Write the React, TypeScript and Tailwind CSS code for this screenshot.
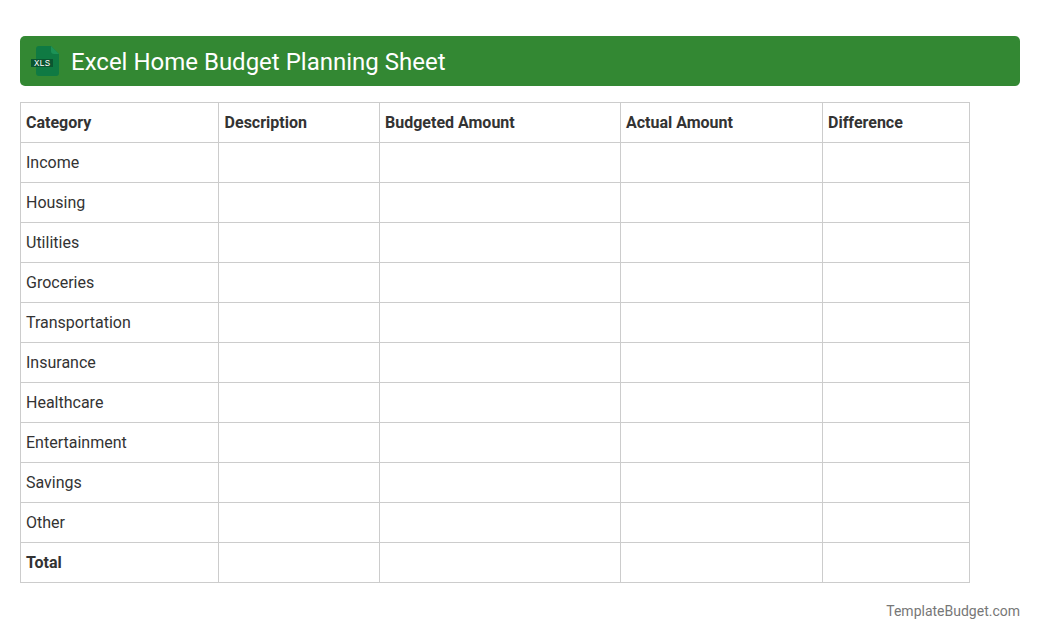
import React from 'react';

const categories = ['Income', 'Housing', 'Utilities', 'Groceries', 'Transportation', 'Insurance', 'Healthcare', 'Entertainment', 'Savings', 'Other'];
const columns = ['Category', 'Description', 'Budgeted Amount', 'Actual Amount', 'Difference'];

function XlsIcon() {
    return (
        <svg width="30" height="32" viewBox="0 0 30 32" className="shrink-0">
            <path d="M6 4a3 3 0 0 1 3-3h12l8 8v19a3 3 0 0 1-3 3H9a3 3 0 0 1-3-3z" fill="#0f7a43" />
            <path d="M21 1l8 8h-5a3 3 0 0 1-3-3z" fill="#1c9256" />
            <rect x="1" y="14" width="22" height="8" fill="#0a5530" />
            <text x="12" y="21" textAnchor="middle" fontSize="9" fill="#fff" fontFamily="'Liberation Mono', monospace">XLS</text>
        </svg>
    );
}

function Row({ label, bold }: { label: string; bold?: boolean }) {
    return (
        <tr className="h-10">
            <td className={`border border-[#cccccc] px-[5px] py-0 ${bold ? 'font-bold' : ''}`}>{label}</td>
            <td className="border border-[#cccccc]"></td>
            <td className="border border-[#cccccc]"></td>
            <td className="border border-[#cccccc]"></td>
            <td className="border border-[#cccccc]"></td>
        </tr>
    );
}

export default function App() {
    return (
        <div className="w-[1040px] h-[640px] overflow-hidden bg-white px-5 pt-9 font-['Roboto',sans-serif] text-[#333333]">
            <div className="flex h-[50px] items-center rounded-[5px] bg-[#338833] pl-[10px]">
                <XlsIcon />
                <h1 className="ml-[11px] pt-[2px] text-2xl font-normal text-white">Excel Home Budget Planning Sheet</h1>
            </div>

            <table className="mt-4 w-[949px] table-fixed border-collapse text-base">
                <colgroup>
                    <col className="w-[198px]" />
                    <col className="w-[161px]" />
                    <col className="w-[241px]" />
                    <col className="w-[202px]" />
                    <col className="w-[147px]" />
                </colgroup>
                <thead>
                    <tr className="h-10">
                        {columns.map((c) => (
                            <th key={c} className={`border border-[#cccccc] py-0 pr-[5px] text-left font-bold ${c === 'Description' ? 'pl-[5.6px]' : 'pl-[5px]'}`}>{c}</th>
                        ))}
                    </tr>
                </thead>
                <tbody>
                    {categories.map((c) => (
                        <Row key={c} label={c} />
                    ))}
                    <Row label="Total" bold />
                </tbody>
            </table>

            <div className="mt-[18px] text-right text-sm text-[#777777]">TemplateBudget.com</div>
        </div>
    );
}
